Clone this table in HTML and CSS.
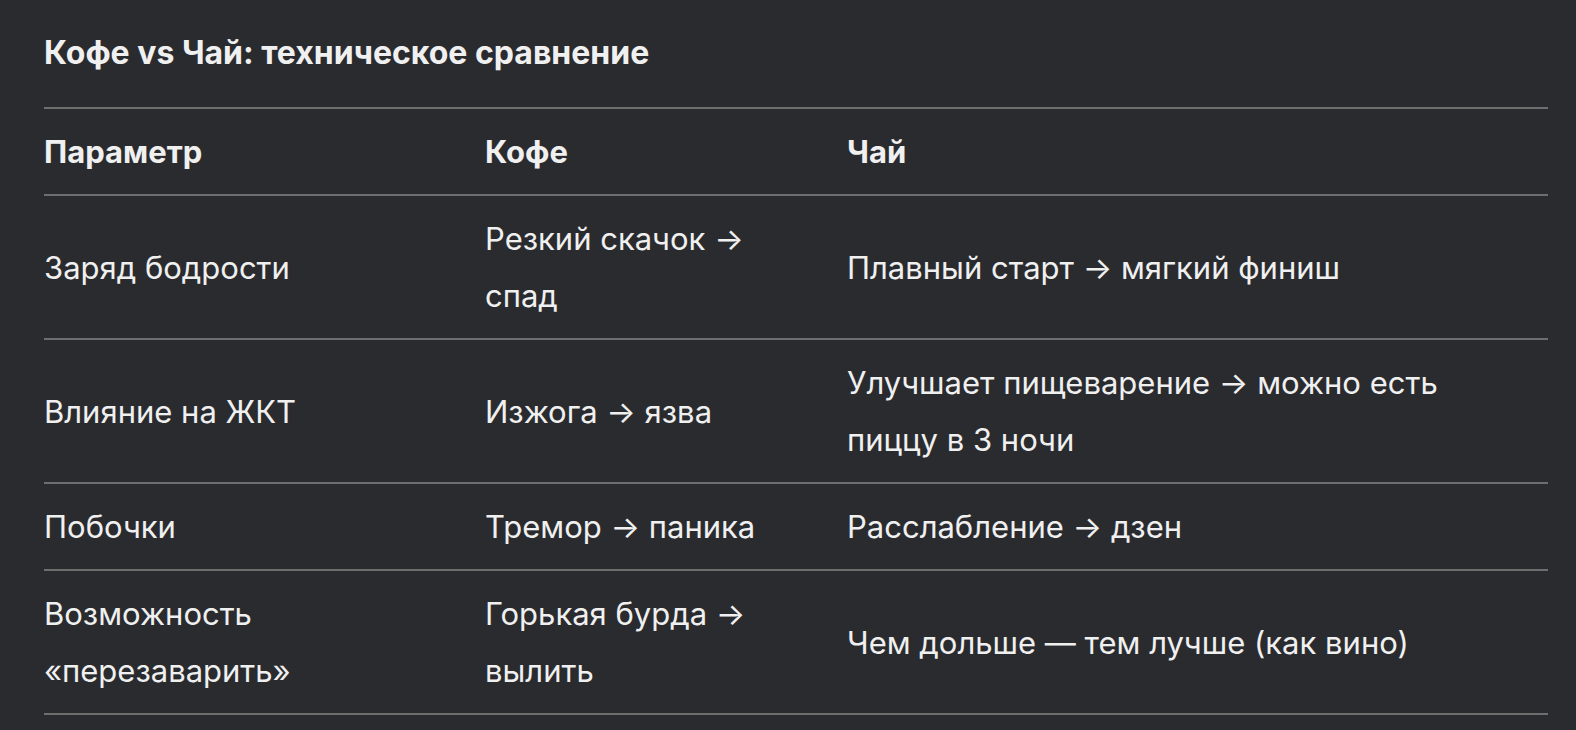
FILE: index.html
```html
<!DOCTYPE html>
<html lang="ru">
<head>
    <meta charset="UTF-8">
    <meta name="viewport" content="width=device-width, initial-scale=1.0">
    <title>Кофе vs Чай</title>
    <link rel="stylesheet" href="styles.css">
</head>
<body>
    <div class="answer">
        <h3 class="answer-title">Кофе vs Чай: техническое сравнение</h3>
        <table class="compare">
            <colgroup>
                <col class="col-param">
                <col class="col-coffee">
                <col class="col-tea">
            </colgroup>
            <thead>
                <tr>
                    <th>Параметр</th>
                    <th>Кофе</th>
                    <th>Чай</th>
                </tr>
            </thead>
            <tbody>
                <tr>
                    <td>Заряд бодрости</td>
                    <td>Резкий скачок → спад</td>
                    <td>Плавный старт → мягкий финиш</td>
                </tr>
                <tr>
                    <td>Влияние на ЖКТ</td>
                    <td>Изжога → язва</td>
                    <td>Улучшает пищеварение → можно есть пиццу в 3 ночи</td>
                </tr>
                <tr>
                    <td>Побочки</td>
                    <td>Тремор → паника</td>
                    <td>Расслабление → дзен</td>
                </tr>
                <tr>
                    <td>Возможность «перезаварить»</td>
                    <td>Горькая бурда → вылить</td>
                    <td>Чем дольше — тем лучше (как вино)</td>
                </tr>
            </tbody>
        </table>
    </div>
</body>
</html>
```

FILE: styles.css
```css
body {
    margin: 0;
    background-color: #2a2b2f;
    color: #f0f0f0;
    font-family: Inter, "Noto Sans", sans-serif;
    font-size: 31px;
    line-height: 57px;
    overflow: hidden;
}
.answer {
    padding: 24px 28px 0 44px;
}
.answer-title {
    margin: 0 0 26px 0;
    font-size: 32px;
    font-weight: 700;
    line-height: 57px;
}
table.compare {
    width: 100%;
    border-collapse: collapse;
    table-layout: fixed;
    border-top: 2px solid #6e6e6e;
}
.col-param {
    width: 425px;
}
.col-coffee {
    width: 362px;
}
table.compare tr {
    border-bottom: 2px solid #6e6e6e;
}
table.compare th,
table.compare td {
    text-align: left;
    vertical-align: middle;
    padding: 14px 16px;
}
table.compare th {
    font-weight: 700;
}
table.compare th:first-child,
table.compare td:first-child {
    padding-left: 0;
}
```
